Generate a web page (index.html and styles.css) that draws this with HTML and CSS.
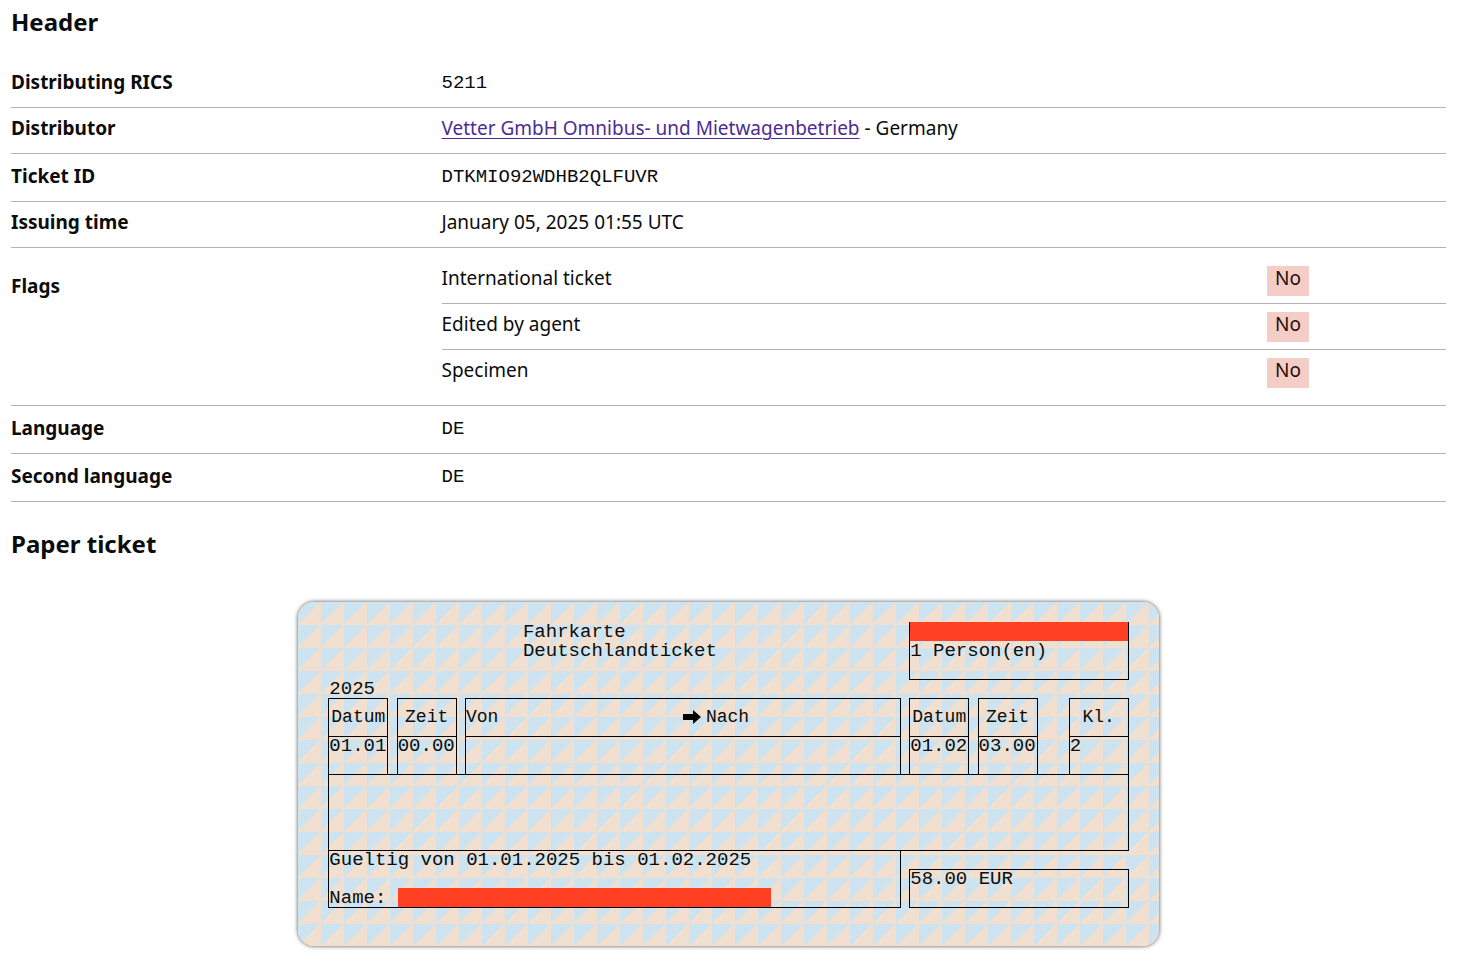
FILE: index.html
```html
<!DOCTYPE html>
<html lang="en">
<head>
    <meta charset="UTF-8">
    <meta name="viewport" content="width=device-width, initial-scale=1.0">
    <title>Ticket details</title>
    <link rel="stylesheet" href="styles.css">
</head>
<body>
    <main>
        <h2>Header</h2>
        <dl class="summary">
            <div class="row">
                <dt>Distributing RICS</dt>
                <dd class="code">5211</dd>
            </div>
            <div class="row">
                <dt>Distributor</dt>
                <dd><a href="#">Vetter GmbH Omnibus- und Mietwagenbetrieb</a> - Germany</dd>
            </div>
            <div class="row row-code">
                <dt>Ticket ID</dt>
                <dd class="code">DTKMIO92WDHB2QLFUVR</dd>
            </div>
            <div class="row">
                <dt>Issuing time</dt>
                <dd>January 05, 2025 01:55 UTC</dd>
            </div>
            <div class="row row-flags">
                <dt>Flags</dt>
                <dd>
                    <dl class="flags">
                        <div class="flag">
                            <dt>International ticket</dt>
                            <dd><span class="tag">No</span></dd>
                        </div>
                        <div class="flag">
                            <dt>Edited by agent</dt>
                            <dd><span class="tag">No</span></dd>
                        </div>
                        <div class="flag">
                            <dt>Specimen</dt>
                            <dd><span class="tag">No</span></dd>
                        </div>
                    </dl>
                </dd>
            </div>
            <div class="row row-code">
                <dt>Language</dt>
                <dd class="code">DE</dd>
            </div>
            <div class="row row-code">
                <dt>Second language</dt>
                <dd class="code">DE</dd>
            </div>
        </dl>

        <h2>Paper ticket</h2>
        <div class="ticket">
            <!-- boxes -->
            <span class="box box-holder"></span>
            <span class="box box-route"></span>
            <span class="box box-details"></span>
            <span class="box box-validity"></span>
            <span class="box box-price"></span>

            <!-- column headings -->
            <span class="box head date-from">Datum</span>
            <span class="box head time-from">Zeit</span>
            <span class="box head stations">
                <span>Von</span>
                <span class="to">
                    <svg class="arrow" viewBox="0 0 18 16" aria-hidden="true"><path d="M0 4h10V0L18 7l-8 7V10H0z"/></svg>
                    Nach
                </span>
            </span>
            <span class="box head date-to">Datum</span>
            <span class="box head time-to">Zeit</span>
            <span class="box head class">Kl.</span>
            <span class="box cell date-from"></span>
            <span class="box cell time-from"></span>
            <span class="box cell date-to"></span>
            <span class="box cell time-to"></span>
            <span class="box cell class"></span>

            <!-- texts -->
            <span class="text title">Fahrkarte</span>
            <span class="text product">Deutschlandticket</span>
            <span class="redacted redacted-holder"></span>
            <span class="text persons">1 Person(en)</span>
            <span class="text year">2025</span>
            <span class="text value date-from">01.01</span>
            <span class="text value time-from">00.00</span>
            <span class="text value date-to">01.02</span>
            <span class="text value time-to">03.00</span>
            <span class="text value class">2</span>
            <span class="text validity">Gueltig von 01.01.2025 bis 01.02.2025</span>
            <span class="text name">Name:</span>
            <span class="redacted redacted-name"></span>
            <span class="text price">58.00 EUR</span>
        </div>
    </main>
</body>
</html>
```

FILE: styles.css
```css
* {
    box-sizing: border-box;
}

body {
    margin: 0;
    padding: 7px 26px 16px 11px;
    background: #fff;
    color: #0b0c0c;
    font-family: "Noto Sans", sans-serif;
    font-size: 19px;
    line-height: 25px;
}

h2 {
    margin: 0;
    font-size: 24px;
    line-height: 30px;
}

dl, dd {
    margin: 0;
}

a {
    color: #4c2c92;
    text-underline-offset: 3px;
    text-decoration-thickness: 1px;
}

.code {
    margin-bottom: -2px;
    font-family: "Liberation Mono", monospace;
    line-height: 27px;
}

/* Summary list */

.summary {
    margin: 25px 0 27px;
}

.row {
    display: grid;
    grid-template-columns: 30% 1fr;
    padding: 8px 0 12px;
    border-bottom: 1px solid #b1b4b6;
}

.row dt {
    font-weight: bold;
}

.row-code {
    padding: 10px 0 12px;
}

.row-flags {
    padding: 10px 0;
}

.row-flags > dt {
    padding-top: 16px;
}

.flag {
    display: grid;
    grid-template-columns: 1fr 179px;
    padding: 8px 0 12px;
    border-bottom: 1px solid #b1b4b6;
}

.flag:last-child {
    border-bottom: none;
}

.row .flag dt {
    font-weight: normal;
}

.tag {
    display: block;
    width: max-content;
    margin-bottom: -5px;
    padding: 0 8px 5px;
    background: #f4cdc6;
    color: #2a0b06;
}

/* Paper ticket, 72 x 16 characters */

.ticket {
    display: grid;
    grid-template-columns: repeat(72, 1ch);
    grid-template-rows: repeat(16, 19px);
    width: max-content;
    margin: 43px auto 0;
    padding: 20px 21px 20px 20px;
    border-radius: 16px;
    /* triangles with a thin line between the tiles */
    background-image:
        conic-gradient(from 0deg at 22px 22px, #f1dfcf 0deg 270deg, transparent 270deg),
        linear-gradient(135deg, #cde4f0 47%, #f1dfcf 49%);
    background-size: 23px 23px;
    box-shadow: 0 0 4px rgba(0, 0, 0, 0.7);
    font-family: "Liberation Mono", monospace;
    font-size: 19px;
    line-height: 19px;
    white-space: nowrap;
}

.box {
    margin: 0 -2px -1px -1px;
    border: 1px solid #000;
}

.head {
    display: flex;
    align-items: center;
    justify-content: center;
    grid-row: 5 / 7;
    font-size: 18px;
}

.cell {
    grid-row: 7 / 9;
}

.value {
    grid-row: 7;
}

.date-from { grid-column: 2 / 7; }
.time-from { grid-column: 8 / 13; }
.stations { grid-column: 14 / 52; }
.date-to { grid-column: 53 / 58; }
.time-to { grid-column: 59 / 64; }
.class { grid-column: 67 / 72; }

.stations {
    display: grid;
    grid-template-columns: 1fr 1fr;
}

.to {
    display: flex;
    align-items: center;
    gap: 5px;
}

.arrow {
    width: 18px;
    height: 16px;
}

.box-holder {
    grid-area: 1 / 53 / 4 / 72;
    border-top: none;
}

.box-route { grid-area: 7 / 14 / 9 / 52; }
.box-details { grid-area: 9 / 2 / 13 / 72; }
.box-validity { grid-area: 13 / 2 / 16 / 52; }
.box-price { grid-area: 14 / 53 / 16 / 72; }

.title { grid-area: 1 / 19; }
.product { grid-area: 2 / 19; }
.persons { grid-area: 2 / 53; }
.year { grid-area: 4 / 2; }
.validity { grid-area: 13 / 2; }
.name { grid-area: 15 / 2; }
.price { grid-area: 14 / 53; }

/* one-letter tracks, the text runs on over the next ones */
.text {
    width: 0;
    padding-top: 1px;
}

.redacted {
    background: #ff4023;
}

.redacted-holder {
    grid-area: 1 / 53 / 2 / 72;
    margin-right: -1px;
}

.redacted-name {
    grid-area: 15 / 8 / 16 / 41;
    margin-right: 3px;
}
```
